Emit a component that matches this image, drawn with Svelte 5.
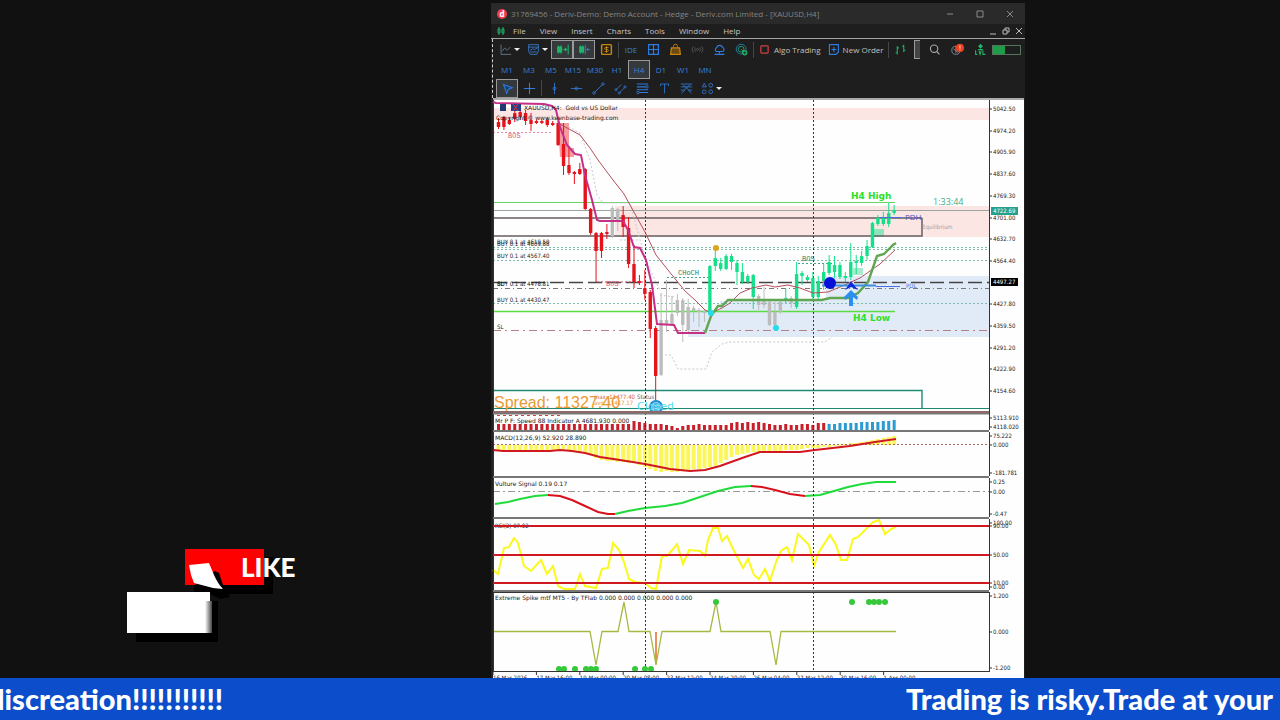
<script lang="ts">
	type Candle = [number, number, number, number, number, string];

	const menus = ["File", "View", "Insert", "Charts", "Tools", "Window", "Help"];
	const periods = ["M1", "M3", "M5", "M15", "M30", "H1", "H4", "D1", "W1", "MN"];
	const drawTools = ["vline", "hline", "trend", "channel", "fibo", "text", "gann"];
	const activePeriod = "H4";

	const step = 5.42;
	const barX = (i: number) => 498.5 + i * step;

	const R = "#e6121c";
	const G = "#14e08a";
	const N = "#bcbcbc";

	// index, high, body top, body bottom, low, colour
	const candles: Candle[] = [
		[0, 118, 122, 127, 129, R], [1, 116, 117, 127, 130, R], [2, 117, 120, 124, 125, R], [3, 110, 113, 119, 122, R],
		[4, 109, 112, 117, 120, R], [5, 110, 113, 121, 125, R], [6, 113, 120, 124, 131, R], [7, 120, 121, 123, 124, R],
		[8, 120, 121, 123, 124, R], [9, 118, 120, 125, 127, R], [10, 121, 123, 125, 126, R], [11, 121, 123, 145, 146, R],
		[12, 123, 144, 166, 175, R], [13, 146, 165, 173, 175, R], [14, 171, 172, 174, 184, R], [15, 163, 169, 174, 175, R],
		[16, 168, 169, 209, 210, R], [17, 208, 209, 233, 235, R], [18, 232, 233, 251, 282, R], [19, 232, 233, 251, 258, R],
		[20, 224, 232, 234, 239, R], [21, 206, 208, 236, 238, N], [22, 208, 209, 220, 231, N], [23, 206, 215, 227, 237, R],
		[24, 217, 228, 264, 268, R], [25, 245, 264, 282, 288, R], [26, 275, 281, 283, 285, R], [27, 270, 288, 294, 300, R],
		[28, 290, 292, 329, 338, R], [29, 326, 328, 376, 402, R], [30, 293, 320, 375, 376, N], [31, 280, 320, 324, 332, N],
		[32, 296, 314, 324, 326, N], [33, 294, 300, 313, 316, N], [34, 298, 300, 325, 342, N], [35, 299, 307, 330, 332, N],
		[36, 306, 308, 311, 322, N], [37, 308, 310, 312, 327, N], [38, 309, 311, 313, 322, N], [39, 265, 266, 313, 315, G],
		[40, 249, 258, 266, 271, G], [41, 258, 263, 269, 271, G], [42, 254, 256, 269, 270, G], [43, 254, 256, 262, 270, G],
		[44, 260, 263, 272, 285, G], [45, 263, 272, 282, 284, G], [46, 274, 276, 282, 284, G], [47, 274, 275, 297, 309, G],
		[48, 294, 296, 305, 310, N], [49, 287, 299, 305, 308, N], [50, 300, 302, 325, 326, N], [51, 302, 312, 325, 328, N],
		[52, 300, 302, 312, 314, N], [53, 288, 298, 301, 303, G], [54, 296, 298, 303, 308, N], [55, 262, 274, 307, 309, G],
		[56, 271, 273, 276, 285, G], [57, 275, 277, 280, 282, G], [58, 272, 278, 297, 299, G], [59, 276, 281, 297, 299, G],
		[60, 264, 272, 281, 290, G], [61, 255, 262, 273, 275, G], [62, 256, 265, 272, 278, G], [63, 262, 265, 277, 279, G],
		[64, 272, 276, 278, 282, G], [65, 243, 262, 277, 280, G], [66, 255, 261, 263, 274, G], [67, 251, 256, 263, 266, G],
		[68, 240, 246, 256, 260, G], [69, 222, 223, 247, 248, G], [70, 215, 218, 224, 226, G], [71, 212, 218, 224, 226, G],
		[72, 203, 213, 224, 227, G], [73, 205, 210, 213, 215, G]
	];

	const prices = ["5042.50", "4974.20", "4905.90", "4837.60", "4769.30", "4701.00", "4632.70", "4564.40", "", "4427.80", "4359.50", "4291.20", "4222.90", "4154.60"];
	const orders = [["BUY 0.1 at 4619.50", 244], ["BUY 0.1 at 4609.88", 246], ["BUY 0.1 at 4567.40", 258], ["BUY 0.1 at 4478.81", 286], ["SL", 286], ["BUY 0.1 at 4430.47", 302], ["SL", 329]] as const;
	const dates = ["16 Mar 2026", "17 Mar 16:00", "19 Mar 00:00", "20 Mar 08:00", "23 Mar 12:00", "24 Mar 20:00", "26 Mar 04:00", "27 Mar 12:00", "30 Mar 16:00", "1 Apr 00:00"];

	const speed = [6,6,6,6,6,6,6,6,6,6,6,6,6,6,6,6,6,6,6,6,6,6,6,6,6,9,8,7,6,6,6,5,4,2,4,5,5,6,5,5,5,5,5,7,8,7,8,7,8,7,6,5,5,6,5,5,6,6,5,7,7,6,6,7,7,7,7,8,8,8,8,9,9,10];
	const macd = [6,6,6,6,6,6,6,6,6,6,6,6,6,6,6,7,8,10,13,15,16,16,17,17,18,18,20,22,24,26,27,26,27,27,26,25,24,24,23,22,21,18,15,12,10,9,8,7,7,6,6,6,6,5,5,5,4,3,3,3,2,2,1,1,-1,-2,-2,-3,-4,-5,-6,-7,-8,-9];

	const signals = [
		["#1fdc3a", "495,504 508,502 520,499 535,496 548,495"],
		["#d8101c", "548,495 560,496 572,500 585,506 598,512 608,514 615,514"],
		["#1fdc3a", "615,514 628,511 645,508 665,506 682,503 700,497 718,491 735,487 751,486"],
		["#d8101c", "751,486 762,487 775,490 790,494 805,496"],
		["#1fdc3a", "805,496 820,495 834,491 848,487 862,484 876,482 896,482"]
	];

	const rsi = "493,570 498,574 504,548 509,547 514,538 518,543 524,566 531,571 541,560 547,574 553,566 558,586 564,589 575,589 580,574 585,586 596,588 602,569 608,568 613,543 619,550 624,562 629,579 635,582 645,583 651,588 656,589 662,556 667,556 673,549 677,544 683,564 689,550 700,551 705,556 708,540 713,528 718,528 722,541 727,536 733,549 743,568 748,559 754,575 759,579 765,569 770,581 776,562 781,551 787,547 792,560 798,534 809,545 814,566 819,552 830,535 836,545 841,560 847,560 853,539 858,537 873,522 879,520 885,534 891,529 896,527";

	const topDots = [716, 852, 869, 874, 879, 885];
	const bottomDots = [559, 564, 575, 586, 591, 596, 635, 645, 651];
</script>

{#snippet icon(name: string)}
	<svg class="icon" viewBox="0 0 16 16" aria-hidden="true">
		{#if name === "line"}
			<path d="M2.5 2v12H15M4 10l3-4 3 3 4-4" stroke="#6f8494" />
		{:else if name === "folder"}
			<path d="M2 2h12v8l-2 4H4l-2-4zM2 5h12" stroke="#3d83d8" /><path d="M4 9l3-2 2 1 4-2M4 11h8" stroke="#3d83d8" />
		{:else if name === "scroll"}
			<path d="M3 3v10M6 3v10M2 5h2v6H2zM5 5h2v6H5zM9 8h4M11 6l2 2-2 2M15 2v12" stroke="#22b36a" stroke-width="1.300" />
		{:else if name === "shift"}
			<path d="M3 3v10M6 3v10M2 5h2v6H2zM5 5h2v6H5z" stroke="#22b36a" stroke-width="1.300" /><path d="M9 2v12M15 8h-4M12.500 6l-2 2 2 2" stroke="#3d83d8" />
		{:else if name === "dollar"}
			<rect x="2" y="2" width="12" height="12" rx="1" stroke="#c98512" stroke-width="1.8" /><path d="M10.500 5.500H7a1.200 1.200 0 0 0 0 2.500h2a1.200 1.200 0 0 1 0 2.500H5.500M8 4v8" stroke="#d89015" />
		{:else if name === "grid"}
			<path d="M2 2h12v12H2zM8 2v12M2 8h12" stroke="#2f7be0" stroke-width="1.500" />
		{:else if name === "bag"}
			<path d="M3 6h10l1 8H2z" stroke="#c98512" fill="#6d4a0e" stroke-width="1.500" /><path d="M5.500 6V4a2.500 2.500 0 0 1 5 0v2" stroke="#c98512" />
		{:else if name === "radio"}
			<circle cx="8" cy="8" r="1.200" stroke="#5c5c5c" /><path d="M5.500 5.500a4 4 0 0 0 0 5M10.500 5.500a4 4 0 0 1 0 5M3 4a6 6 0 0 0 0 8M13 4a6 6 0 0 1 0 8" stroke="#5c5c5c" />
		{:else if name === "cloud"}
			<path d="M4 10.500a3 3 0 0 1 .5-5 4 4 0 0 1 7.500 0 2.800 2.800 0 0 1 0 5zM8 11v2M2 14h12" stroke="#2f7be0" stroke-width="1.400" />
		{:else if name === "web"}
			<circle cx="7.500" cy="7.500" r="6" stroke="#2389ba" /><circle cx="7.500" cy="7.500" r="3.500" stroke="#22b36a" /><path d="M7.500 7.500l4 4" stroke="#22b36a" /><circle cx="12" cy="12" r="3.300" fill="#22b36a" /><path d="M10 12h4M12 10v4" stroke="#10301f" />
		{:else if name === "stop"}
			<rect x="3.500" y="3.500" width="9" height="9" rx="1" stroke="#d04040" stroke-width="1.500" />
		{:else if name === "order"}
			<path d="M3 2h11v9l-3 3H3zM8.500 5v6M5.500 8h6" stroke="#2f7be0" stroke-width="1.400" />
		{:else if name === "bars"}
			<path d="M4 4v10M2 12h2M4 6h2M12 2v9M10 4h2M12 9h2" stroke="#22b36a" stroke-width="1.300" />
		{:else if name === "search"}
			<circle cx="7.500" cy="7" r="4.500" stroke="#a9a9a9" stroke-width="1.400" /><path d="M11 10.500l3 3.500" stroke="#a9a9a9" stroke-width="1.400" />
		{:else if name === "bell"}
			<circle cx="6" cy="9" r="5" stroke="#8d99a6" /><path d="M3 7l6 5M6 4v8" stroke="#8d99a6" /><circle cx="11" cy="6" r="5" fill="#f0401e" /><path d="M11 3v4M11 8v1" stroke="#fff" />
		{:else if name === "level"}
			<path d="M8 1l3 3-3 3-3-3z" fill="#22b36a" /><path d="M5 8h6M2 9v5h2M6 9l1.500 5L9 9M11 9v5h3" stroke="#22b36a" stroke-width="1.300" />
		{:else if name === "cursor"}
			<path d="M3 3l11 4-5 2-2 5z" fill="#173f70" stroke="#2f7be0" stroke-width="1.300" />
		{:else if name === "cross"}
			<path d="M8 1v14M1 8h14" stroke="#2f7be0" stroke-width="1.300" />
		{:else if name === "vline"}
			<path d="M8 1v14" stroke="#2f7be0" /><circle cx="8" cy="8" r="1.800" stroke="#2f7be0" />
		{:else if name === "hline"}
			<path d="M1 8h14" stroke="#2f7be0" /><circle cx="8" cy="8" r="1.800" stroke="#2f7be0" />
		{:else if name === "trend"}
			<path d="M3.500 12.500l9-9" stroke="#2f7be0" /><circle cx="2.500" cy="13.500" r="1.500" stroke="#2f7be0" /><circle cx="13.500" cy="2.500" r="1.500" stroke="#2f7be0" />
		{:else if name === "channel"}
			<path d="M3 9l6-6M7 13l6-6" stroke="#2f7be0" /><circle cx="2.500" cy="9.500" r="1.300" stroke="#2f7be0" /><circle cx="6.500" cy="13.500" r="1.300" stroke="#2f7be0" /><circle cx="13.500" cy="6" r="1.300" stroke="#2f7be0" />
		{:else if name === "fibo"}
			<path d="M1 2.500h14M1 6h11M1 9.500h14M4 13h11" stroke="#2f7be0" stroke-width="1.300" /><circle cx="13.500" cy="6" r="1.500" stroke="#2f7be0" /><circle cx="2.500" cy="13" r="1.500" stroke="#2f7be0" />
		{:else if name === "text"}
			<path d="M3 5V2.500h10V5M8 2.500V14" stroke="#2f7be0" />
		{:else if name === "gann"}
			<path d="M1 2.500h14M1 6h14M1 10h5M10 10h5M2 14l6-7 6 7M4 4l4 3 5-4" stroke="#2f7be0" />
		{:else if name === "shapes"}
			<path d="M4 1.500L6.500 6h-5z" stroke="#2f7be0" /><circle cx="12" cy="4" r="2.300" stroke="#2f7be0" /><circle cx="4" cy="12" r="2.300" stroke="#2f7be0" /><circle cx="12" cy="12" r="2.300" stroke="#2f7be0" />
		{/if}
	</svg>
{/snippet}

{#snippet tool(name: string, active = false)}
	<button class="tool" class:active aria-label={name}>{@render icon(name)}</button>
{/snippet}

{#snippet dropTool(name: string)}
	<button class="tool drop" aria-label={name}>{@render icon(name)}<span class="caret"></span></button>
{/snippet}

<!-- plot borders and the day separators that run through every pane -->
{#snippet frame(top: number, bottom: number)}
	<path d="M645.500 {top}V{bottom}M813.500 {top}V{bottom}" stroke="#333" stroke-dasharray="2 2" />
	<path d="M493.500 {top}V{bottom}M989.500 {top}V{bottom}" stroke="#333" />
{/snippet}

{#snippet tick(y: number, label: string)}
	<path d="M989 {y}h3" stroke="#333" />
	<text x="993" y={y + 2}>{label}</text>
{/snippet}

<div class="scene">
	<main class="stage">
		<div class="promo">
			<svg viewBox="127 545 180 100" role="img" aria-label="Like">
				<defs>
					<linearGradient id="fold"><stop offset="0" stop-color="#fff" /><stop offset="1" stop-color="#444" /></linearGradient>
				</defs>
				<path d="M194 557h79v37h-79z" fill="#000" />
				<path d="M185 549h79v36h-79z" fill="#f00" />
				<path d="M136 601h82v41h-82z" fill="#000" />
				<path d="M195 585l20-14 4 2 4 12 7 12-10 2-10-5z" fill="#000" />
				<path d="M127 592h83v41h-83z" fill="#fff" />
				<path d="M205 601h7v32h-7z" fill="url(#fold)" />
				<path d="M189 565l20-2 5 12q4 9 9 14l-10-1-19-5-3-8z" fill="#fff" />
				<text x="241" y="577">LIKE</text>
			</svg>
		</div>

		<section class="terminal">
			<header class="title">
				<span class="logo">d</span>
				<h1>31769456 - Deriv-Demo: Demo Account - Hedge - Deriv.com Limited - [XAUUSD,H4]</h1>
				<div class="window-buttons">
					<button aria-label="Minimize"><svg viewBox="0 0 8 8"><path d="M1 4h6" /></svg></button>
					<button aria-label="Maximize"><svg viewBox="0 0 8 8"><path d="M1 1h6v6H1z" /></svg></button>
					<button aria-label="Close"><svg viewBox="0 0 8 8"><path d="M1 1l6 6M7 1L1 7" /></svg></button>
				</div>
			</header>

			<nav class="menu">
				<svg class="menu-logo" viewBox="0 0 8 8"><path d="M2 0v8M6 0v8M1 2h2v4H1zM5 2h2v4H5z" /></svg>
				{#each menus as item}
					<button>{item}</button>
				{/each}
				<div class="child-buttons">
					<button aria-label="Minimize chart"><svg viewBox="0 0 8 8"><path d="M1 7h6" /></svg></button>
					<button aria-label="Restore chart"><svg viewBox="0 0 8 8"><path d="M3 3V1h4v4H5M1 3h4v4H1z" /></svg></button>
					<button aria-label="Close chart"><svg viewBox="0 0 8 8"><path d="M1 1l6 6M7 1L1 7" /></svg></button>
				</div>
			</nav>

			<div class="toolbars">
				<div class="row main-row">
					{@render dropTool("line")}
					{@render dropTool("folder")}
					{@render tool("scroll", true)}
					{@render tool("shift", true)}
					{@render tool("dollar")}
					<i class="sep"></i>
					<button class="tool ide">IDE</button>
					{#each ["grid", "bag", "radio", "cloud", "web"] as name}
						{@render tool(name)}
					{/each}
					<i class="sep"></i>
					<button class="tool wide">{@render icon("stop")}Algo Trading</button>
					<button class="tool wide">{@render icon("order")}New Order</button>
					<i class="sep"></i>
					{@render tool("bars")}
					<i class="grip"></i>
					<div class="status">
						{@render tool("search")}
						{@render tool("bell")}
						{@render tool("level")}
						<span class="battery"><span></span></span>
					</div>
				</div>
				<div class="row periods">
					{#each periods as period}
						<button class="tool" class:active={period === activePeriod}>{period}</button>
					{/each}
				</div>
				<div class="row draw-row">
					{@render tool("cursor", true)}
					{@render tool("cross")}
					<i class="sep"></i>
					{#each drawTools as name}
						{@render tool(name)}
					{/each}
					{@render dropTool("shapes")}
				</div>
			</div>

			<div class="charts">
				<svg viewBox="491 98 534 315">
					<rect x="493" y="98" width="531" height="2" fill="#aaa" />
					<rect x="493" y="108" width="496" height="12" fill="#fbe6e4" />
					<rect x="615" y="206" width="374" height="31" fill="#fbe6e4" />
					<rect x="688" y="310" width="301" height="27" fill="#e1eaf7" />
					<rect x="720" y="301" width="110" height="9" fill="#e1eaf7" />
					<rect x="826" y="276" width="163" height="35" fill="#e1eaf7" />
					<path d="M558 123h11v25h5v9h-14z" fill="#f79a9d" />
					<rect x="874" y="229" width="10" height="8" fill="#8fe3bd" />
					<rect x="853" y="268" width="10" height="7" fill="#a8ecd0" />

					<path d="M493 202.500H895" stroke="#67d467" />
					<path d="M493 210.500H989" stroke="#9aa5a3" />
					<path d="M493 218H922M493 236H922V218" stroke="#665d60" stroke-width="1.500" />
					<path d="M493 247.500H989M493 249.500H989M493 260.500H989M493 303.500H989" stroke="#7dbbac" stroke-dasharray="2 2" />
					<path d="M493 282.500H989" stroke="#444" stroke-width="1.400" stroke-dasharray="14 5" />
					<path d="M493 288.500H989" stroke="#777" stroke-dasharray="5 3 1 3" />
					<path d="M493 311.500H895" stroke="#5bdc42" stroke-width="1.400" />
					<path d="M493 330.500H989" stroke="#b58088" stroke-dasharray="8 4 2 4" />
					<path d="M493 390.500H922V408" stroke="#1f8a74" stroke-width="1.400" />
					<path d="M493 408.500H989" stroke="#1f8a74" />
					<path d="M493 132.500H553" stroke="#e58a9c" stroke-dasharray="2 2" />
					<path d="M597 282H646" stroke="#b94b60" stroke-dasharray="2 2" />
					<path d="M667 277.500H710M798 263.500H835" stroke="#48a488" stroke-dasharray="2 2" />
					<path d="M565 125L580 133 590 160 597 195 603 203H630L640 240 650 270 660 290M665 355H671L678 369H706L712 352 722 344 730 342H825L832 337M620 240H640M660 295L674 297" stroke="#c9c9cf" stroke-dasharray="2 2" />

					{@render frame(100, 413)}

					{#each candles as [i, high, top, bottom, low, color]}
						<path d="M{barX(i)} {high}V{low}" stroke={color} />
						<rect x={barX(i) - 1.7} y={top} width="3.400" height={bottom - top} rx=".6" fill={color} />
					{/each}

					<polyline points="558,123 569,129 580,135 590,148 598,160 613,180 624,194 630,205 645,232 656,255 672,275 685,291 695,300 705,310 711,313 722,308 730,303 740,293 752,288 766,285 775,287 788,285 800,288 813,293 828,292 840,287 860,278 880,264 895,250" stroke="#b5505c" />
					<polyline points="493,102 496,103 544,104 552,106 556,110 560,127 567,145 575,154 581,155 585,175 592,200 597,220 600,221 623,221 628,230 634,247 640,248 646,260 652,285 657,324 674,325 678,333 705,333" stroke="#c72f86" stroke-width="2" />
					<polyline points="705,333 711,316 718,306 722,306 728,300 822,300 830,298 848,298 858,293 868,282 877,256 884,254 888,250 893,245 896,243" stroke="#5fa552" stroke-width="2.400" />

					<path d="M822 285.500H876" stroke="#3b8be0" stroke-width="2" />
					<path d="M876 286.500H900M880 217.500H901" stroke="#4b6fdc" />
					<circle cx="716" cy="248" r="3" fill="#dba520" />
					<circle cx="711" cy="313" r="3" fill="#22dcea" />
					<circle cx="776" cy="328" r="3" fill="#22dcea" />
					<circle cx="830" cy="283" r="6" fill="#0710d8" />
					<path d="M845 290l6-9 7 9-7-3z" fill="#0b2de0" />
					<path d="M851 290l7 7-1 3-4-3v9h-4v-9l-4 3-1-3z" fill="#2b8ff0" />
					<circle cx="656" cy="407" r="6" fill="#8ed6f4" stroke="#1c8fd4" stroke-width="2" />
					<path d="M652 407h8M654 404h4M654 410h4" stroke="#1c8fd4" />

					<rect x="500" y="104" width="6" height="7" fill="#1f3b70" />
					<rect x="511" y="104" width="10" height="7" fill="#243f86" />
					<path d="M513 104l5 7M518 104l-5 7" stroke="#e33" />
					<text class="name" x="524" y="110">XAUUSD,H4:&nbsp; Gold vs US Dollar</text>
					<text class="name" x="496" y="120">Copyright © www.keenbase-trading.com</text>
					{#each orders as [label, y]}
						<text x="497" y={y}>{label}</text>
					{/each}
					<text class="mono" x="508" y="138" fill="#d9607c">BOS</text>
					<text class="mono" x="606" y="286" fill="#d9607c">BOS</text>
					<text class="mono" x="678" y="275" fill="#2f7f64">CHoCH</text>
					<text class="mono" x="802" y="261" fill="#2f7f64">BOS</text>
					<text class="level" x="851" y="199">H4 High</text>
					<text class="level" x="853" y="321">H4 Low</text>
					<text class="timer" x="933" y="205">1:33:44</text>
					<text class="pdh" x="905" y="220">PDH</text>
					<text x="906" y="288" fill="#4b6fdc">PDL</text>
					<text x="922" y="229" fill="#a99a9e">Equilibrium</text>
					<text x="594" y="399" fill="#e0603a">max: 11477.40</text>
					<text x="637" y="399" fill="#666">Status</text>
					<text x="594" y="405" fill="#f0902a">avg: 11417.17</text>
					<text class="spread" x="494" y="408">Spread: 11327.40</text>
					<text class="closed" x="637" y="410">Closed</text>
					<path d="M493 412H989" stroke="#8d6a6a" stroke-width="2" />

					{#each prices as price, i}
						{#if price}
							{@render tick(109 + Math.round(i * 21.7), price)}
						{/if}
					{/each}
					<rect x="991" y="207" width="27" height="8" fill="#26a08c" />
					<text x="993" y="213" fill="#fff">4722.69</text>
					<rect x="991" y="278" width="27" height="8" fill="#000" />
					<text x="993" y="284" fill="#fff">4497.27</text>
				</svg>

				<svg viewBox="491 413 534 19">
					<path d="M497 415.500H563" stroke="#c44" stroke-dasharray="3 3" />
					{#each speed as h, i}
						<rect x={barX(i) - 1.5} y={430 - h} width="3" height={h} fill={i < 61 ? "#c8202a" : "#2b9bd2"} />
					{/each}
					{@render frame(413, 430)}
					<text class="name" x="495" y="423">Mr P F: Speed 88 Indicator A 4681.930 0.000</text>
					<path d="M493 413.500H989M493 431H989" stroke="#777" stroke-width="2" />
					{@render tick(418, "5113.910")}
					{@render tick(427, "4118.020")}
				</svg>

				<svg viewBox="491 432 534 46">
					{#each macd as h, i}
						<rect x={barX(i) - 2} y={h > 0 ? 445 : 445 + h} width="4" height={Math.abs(h)} fill="#fbf65a" />
					{/each}
					<path d="M493 444.500H989" stroke="#b06a5a" stroke-dasharray="2 2" />
					<polyline points="493,450 503,451 550,451 560,450 572,451 585,453 600,457 620,460 645,464 670,469 690,471 705,470 720,466 745,457 760,452 800,452 815,450 850,446 875,442 896,439" stroke="#d01820" stroke-width="2" />
					{@render frame(432, 476)}
					<text class="name" x="495" y="440">MACD(12,26,9) 52.920 28.890</text>
					<path d="M493 477H989" stroke="#777" stroke-width="2" />
					{@render tick(436, "75.222")}
					{@render tick(445, "0.000")}
					{@render tick(473, "-181.781")}
				</svg>

				<svg viewBox="491 478 534 41">
					<path d="M493 491.500H989" stroke="#999" stroke-dasharray="7 3 2 3" />
					{#each signals as [color, points]}
						<polyline {points} stroke={color} stroke-width="2" />
					{/each}
					{@render frame(478, 517)}
					<text class="name" x="495" y="486">Vulture Signal 0.19 0.17</text>
					<path d="M493 518H989" stroke="#777" stroke-width="2" />
					{@render tick(482, "0.25")}
					{@render tick(492, "0.00")}
					{@render tick(514, "-0.47")}
				</svg>

				<svg viewBox="491 519 534 73">
					<polyline points={rsi} stroke="#fbf91c" stroke-width="2" />
					<text x="495" y="528">RSI(2) 97.02</text>
					{@render frame(519, 590)}
					<path d="M493 526H989M493 555H989M493 583H989" stroke="#d01820" stroke-width="2" />
					<path d="M493 591H989" stroke="#777" stroke-width="2" />
					{@render tick(523, "100.00")}
					{@render tick(526, "90.00")}
					{@render tick(555, "50.00")}
					{@render tick(583, "10.00")}
					{@render tick(587, "0.00")}
				</svg>

				<svg viewBox="491 592 534 86">
					<path d="M656 632V664" stroke="#e8915a" stroke-width="2" />
					<polyline points="493,631.500 590,631.500 596,665 602,631.500 618,631.500 624,602 629,631.500 650,631.500 656,665 662,631.500 710,631.500 716,602 721,631.500 770,631.500 776,665 781,631.500 896,631.500" stroke="#a3bb45" stroke-width="1.300" />
					{@render frame(592, 672)}
					{#each topDots as x}
						<circle cx={x} cy="602" r="3" fill="#36c83a" />
					{/each}
					{#each bottomDots as x}
						<circle cx={x} cy="669" r="3" fill="#36c83a" />
					{/each}
					<text class="name" x="495" y="600">Extreme Spike mtf MT5 - By TFlab 0.000 0.000 0.000 0.000 0.000</text>
					<path d="M493 592.500H989M493 671.500H989" stroke="#333" />
					{#each dates as date, i}
						<path d="M{493 + i * 43.4} 672v3" stroke="#333" />
						<text x={493 + i * 43.4} y="680">{date}</text>
					{/each}
					{@render tick(596, "1.200")}
					{@render tick(632, "0.000")}
					{@render tick(668, "-1.200")}
				</svg>
			</div>
		</section>
	</main>

	<footer class="ticker">
		<span>discreation!!!!!!!!!!!</span>
		<span>Trading is risky.Trade at your</span>
	</footer>
</div>

<style>
	:global(body) {
		margin: 0;
		background: #111;
	}

	.scene {
		display: flex;
		flex-direction: column;
		min-height: 100vh;
		overflow: hidden;
		font-family: "Open Sans", "Noto Sans", sans-serif;
	}

	.stage {
		flex: 1;
		display: grid;
		grid-template-columns: 491fr minmax(534px, 534fr) 255fr;
		padding-top: 3px;
		background: #111;
	}

	.promo {
		display: flex;
		align-items: flex-end;
		justify-content: center;
		padding: 0 57px 33px 0;
	}

	.promo svg {
		width: 180px;
		height: 100px;
	}

	.promo text {
		font: 900 26px Lato, sans-serif;
		fill: #fff;
	}

	.terminal {
		background: #1e1e1e;
		color: #b8b8b8;
		font-size: 8px;
	}

	button {
		display: flex;
		align-items: center;
		justify-content: center;
		padding: 0;
		border: 0;
		background: none;
		color: inherit;
		font: inherit;
		line-height: 12px;
		white-space: nowrap;
	}

	.title {
		display: flex;
		align-items: center;
		gap: 4px;
		height: 21px;
		padding: 0 11px 0 6px;
		background: #292a29;
		color: #858585;
	}

	.title h1 {
		margin: 0;
		font-size: 8px;
		font-weight: 400;
		white-space: nowrap;
	}

	.logo {
		width: 10px;
		height: 10px;
		border-radius: 50%;
		background: #f0404e;
		color: #fff;
		font-size: 8px;
		font-weight: 700;
		line-height: 9px;
		text-align: center;
	}

	.window-buttons {
		display: flex;
		gap: 22px;
		margin-left: auto;
	}

	.window-buttons svg,
	.child-buttons svg {
		width: 8px;
		height: 8px;
		fill: none;
		stroke: #8a8a8a;
	}

	.menu {
		display: flex;
		align-items: center;
		gap: 14px;
		height: 14px;
		padding: 0 2px 0 6px;
		border-bottom: 1px solid #a5a5a5;
		color: #c4c4c4;
	}

	.menu-logo {
		width: 8px;
		height: 8px;
		margin-right: -6px;
		fill: none;
		stroke: #22a868;
	}

	.child-buttons {
		display: flex;
		gap: 5px;
		margin-left: auto;
	}

	.child-buttons svg {
		stroke: #bbb;
	}

	.toolbars {
		border-left: 1px dashed #ccc;
		margin-left: 1px;
	}

	.row {
		display: flex;
		align-items: center;
		height: 18px;
		padding-left: 3px;
	}

	.main-row {
		height: 21px;
		padding-left: 2px;
	}

	.draw-row {
		height: 20px;
	}

	.periods {
		display: grid;
		grid-template-columns: repeat(10, 1fr);
		width: 218px;
		color: #3a80d8;
	}

	.tool {
		box-sizing: border-box;
		width: 22px;
		height: 19px;
		border: 1px solid transparent;
	}

	.tool.active {
		border-color: #9a9a9a;
		background: #35393c;
	}

	.drop {
		width: 28px;
		gap: 2px;
	}

	.caret {
		border: 3px solid transparent;
		border-top-color: #eee;
		border-bottom: 0;
	}

	.wide {
		width: auto;
		gap: 3px;
		margin: 0 2px;
		color: #c0c0c0;
	}

	.ide {
		color: #3a80d8;
	}

	.icon {
		flex: none;
		width: 13px;
		height: 13px;
		fill: none;
	}

	.sep {
		width: 1px;
		height: 16px;
		margin: 0 1px;
		background: #454545;
	}

	.grip {
		box-sizing: border-box;
		width: 6px;
		height: 19px;
		margin-left: 2px;
		border: 1px solid #999;
		border-right: 0;
		background: #444;
	}

	.status {
		display: flex;
		align-items: center;
		gap: 1px;
		margin-left: auto;
		padding-right: 4px;
	}

	.battery {
		width: 27px;
		height: 8px;
		border: 1px solid #55745c;
	}

	.battery span {
		display: block;
		width: 45%;
		height: 100%;
		background: #1f9c48;
	}

	.charts {
		margin-right: 1px;
		background: #fefefe;
		box-shadow: inset 2px 0 #222;
	}

	.charts svg {
		display: block;
		width: calc(100% + 1px);
		fill: none;
		font-family: "DejaVu Sans Condensed", "DejaVu Sans", sans-serif;
		font-size: 6px;
	}

	.charts text:not([fill]) {
		fill: #1b1b1b;
	}

	.charts .name {
		font-family: "DejaVu Sans", sans-serif;
	}

	.charts .mono {
		font-family: "Liberation Mono", monospace;
		font-size: 7px;
	}

	.charts text.level {
		font: 700 9px "DejaVu Sans", sans-serif;
		fill: #2be02b;
	}

	.charts text.timer {
		font: 9px "Open Sans", sans-serif;
		fill: #3fae7e;
	}

	.charts text.pdh {
		font: 8px "Open Sans", sans-serif;
		fill: #4b55c8;
	}

	.charts text.spread {
		font: 16px "Liberation Sans", sans-serif;
		fill: #e99a33;
	}

	.charts text.closed {
		font: 11px "DejaVu Sans", sans-serif;
		fill: #4fdcea;
	}

	.ticker {
		display: flex;
		align-items: center;
		justify-content: space-between;
		height: 42px;
		padding-right: 7px;
		overflow: hidden;
		background: #0b4dca;
		color: #fff;
		font: 900 29px/42px Lato, sans-serif;
		white-space: nowrap;
	}

	.ticker span:first-child {
		margin-left: -12px;
	}
</style>
